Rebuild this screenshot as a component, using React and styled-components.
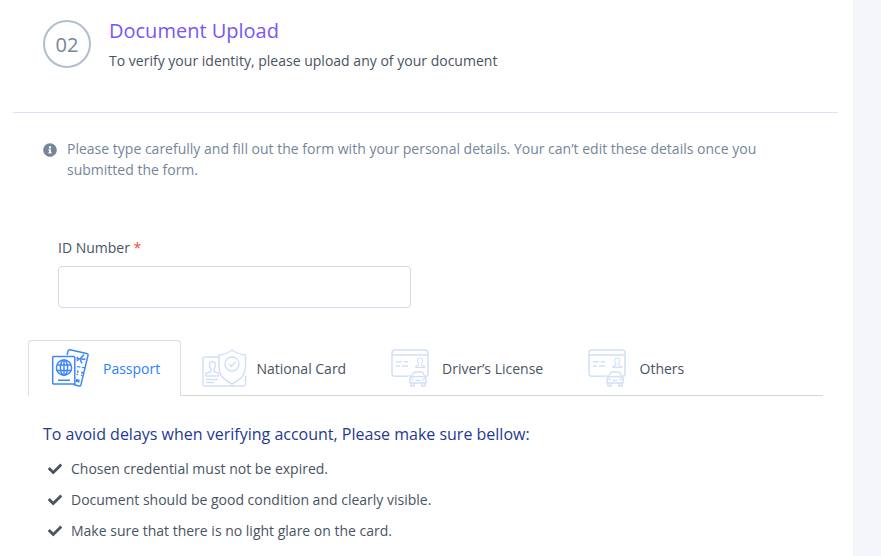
import React from "react";
import styled, { createGlobalStyle } from "styled-components";
import { FaCheck, FaInfoCircle } from "react-icons/fa";

const GlobalStyle = createGlobalStyle`
  * { box-sizing: border-box; }
  body {
    margin: 0;
    background: #f5f6fa;
    color: #495463;
    font: 400 14px/21px "Open Sans", sans-serif;
    overflow: hidden;
  }
`;

const Card = styled.main`
  width: 853px;
  height: 556px;
  padding: 0 15px 0 13px;
  background: #fff;
  overflow: hidden;
`;

const Header = styled.header`
  display: flex;
  gap: 18px;
  height: 113px;
  padding: 20px 30px 0;
  border-bottom: 1px solid #dbe4f7;
`;

const StepNumber = styled.div`
  flex: none;
  width: 48px;
  height: 48px;
  border: 2px solid #b1becc;
  border-radius: 50%;
  color: #758698;
  font-size: 20px;
  line-height: 46px;
  text-align: center;
`;

const Title = styled.h1`
  margin: -4px 0 0;
  color: #7a56f5;
  font-size: 20px;
  font-weight: 400;
  line-height: 30px;
`;

const Subtitle = styled.p`
  margin: 4px 0 0;
  letter-spacing: 0.01px;
`;

const Note = styled.div`
  display: flex;
  gap: 10px;
  margin: 25px 60px 0 30px;
  color: #758698;

  svg {
    flex: none;
    width: 14px;
    height: 14px;
    margin-top: 5px;
  }
`;

const NoteText = styled.p`
  margin: 0;
  letter-spacing: 0.004px;
`;

const Field = styled.label`
  display: block;
  width: 353px;
  margin: 57px 0 0 45px;
`;

const Required = styled.span`
  color: #f0503c;
`;

const Input = styled.input`
  display: block;
  width: 100%;
  height: 42px;
  margin-top: 8px;
  padding: 10px 15px;
  border: 1px solid #d3d9e9;
  border-radius: 4px;
  background: #fff;
  font: inherit;
  outline: none;
`;

const Tabs = styled.nav`
  display: flex;
  height: 56px;
  margin: 32px 15px 0;
  border-bottom: 1px solid #d6d7d9;
`;

const Tab = styled.button`
  display: flex;
  align-items: center;
  width: ${(p) => p.$width}px;
  height: 56px;
  padding: 0 0 0 ${(p) => p.$inset}px;
  border: 1px solid;
  border-color: ${(p) => (p.$active ? "#dcddde #dcddde #fff" : "transparent")};
  border-radius: 4px 4px 0 0;
  background: ${(p) => (p.$active ? "#fff" : "transparent")};
  color: ${(p) => (p.$active ? "#2c80ff" : "inherit")};
  font: inherit;
  white-space: nowrap;

  svg {
    flex: none;
    color: ${(p) => (p.$active ? "#3f86f7" : "#d2e0f9")};
  }
`;

const TabLabel = styled.span`
  margin-left: ${(p) => p.$gap}px;
`;

const Heading = styled.h2`
  margin: 26px 0 0 30px;
  color: #253992;
  font-size: 16px;
  font-weight: 400;
  line-height: 24px;
`;

const List = styled.ul`
  display: grid;
  gap: 10px;
  margin: 12px 0 0 35px;
  padding: 0;
  list-style: none;
`;

const Item = styled.li`
  display: flex;
  align-items: center;
  gap: 9px;

  svg {
    width: 14px;
    height: 14px;
  }
`;

const line = { fill: "none", stroke: "currentColor", strokeWidth: 1.5, strokeLinejoin: "round" };

const PassportIcon = () => (
  <svg width="40" height="40" viewBox="0 0 40 40" {...line}>
    <path d="M17 7 18.2 2.8Q18.6 1.4 20 1.7L36.7 5.4Q38.4 5.8 38 7.4L31 36.7Q30.5 38.4 28.9 38L23.5 36.5" />
    <path d="M3.5 8.5H23.5Q24.8 8.5 24.8 9.8V36H3.5Q2.7 36 2.7 35V9.5Q2.7 8.5 3.5 8.5Z" />
    <circle cx="14" cy="19.7" r="7.6" />
    <ellipse cx="14" cy="19.7" rx="3.6" ry="7.6" />
    <path d="M14 12.1V27.3M7 17H21M7 22.5H21M8 32.3H20" />
    <path d="M26.5 11 35.5 11.2M34 6.5 30 11 32 15.5M27 9 28.5 11 27 12.8" strokeWidth="1.6" />
    <path d="M27 18.5 35.5 20" strokeDasharray="3.5 1.5" strokeWidth="1.2" />
    <path d="M28 22.5 27.2 27M32.3 23.5 31.5 28" strokeDasharray="2.5 1" />
    <path d="M25.8 32.4 29.5 33.3" strokeWidth="3" />
  </svg>
);

const NationalIcon = () => (
  <svg width="46" height="40" viewBox="0 0 46 40" {...line}>
    <path d="M19 9H4Q2 9 2 11V36Q2 38 4 38H42.5Q44.5 38 44.5 36V28" />
    <path d="M31 2Q36 6 44.5 7V19C44.5 28 38 32 31 36 24 32 18 28 18 19V7Q26 6 31 2Z" />
    <circle cx="31" cy="16" r="7" />
    <path d="m28 16 2.3 2.5 4.3-4.8" />
    <path d="M8.5 17C8.5 12.5 14.5 12.5 14.5 17 14.5 19 13.8 20 13 21V23.5L17.5 25.5V28H5V25.5L10 23.5V21C9 20 8.5 19 8.5 17ZM5 31.5H17M5 34.5H13" />
  </svg>
);

const LicenseIcon = () => (
  <svg width="40" height="40" viewBox="0 0 40 40" {...line}>
    <path d="M18 28.2H5Q2 28.2 2 25.5V5Q2 2 5 2H35Q38 2 38 5V26Q38 28 36.5 28.2M2 7H38" />
    <path d="M6 13.7H12M14 13.7H18M6 18H10M12 18H18" />
    <path d="M27.7 12C27.7 9.3 32.7 9.3 32.7 12 32.7 14 32.3 15 31.7 15.7V17.2L34.7 18.4V19.4H25.7V18.4L28.7 17.2V15.7C28.1 15 27.7 14 27.7 12Z" strokeWidth="1.1" />
    <path d="M21.5 29 23.5 25Q24 24 25.5 24H31Q32.5 24 33 25L35 29M20 30Q21 28.5 28 28.5T36 30V35H20ZM21 35V38H24V35M32 35V38H35V35M18.5 28H21M35.5 28H37.5M25.5 32.5H30.5M21.5 31 23.5 32.2M34.5 31 32.5 32.2" />
  </svg>
);

const tabs = [
  { label: "Passport", Icon: PassportIcon, width: 153, inset: 21, gap: 13, active: true },
  { label: "National Card", Icon: NationalIcon, width: 188, inset: 19, gap: 9.5 },
  { label: "Driver’s License", Icon: LicenseIcon, width: 197, inset: 20, gap: 12 },
  { label: "Others", Icon: LicenseIcon, width: 140, inset: 20, gap: 12.5 },
];

const rules = [
  "Chosen credential must not be expired.",
  "Document should be good condition and clearly visible.",
  "Make sure that there is no light glare on the card.",
];

export default function App() {
  return (
    <>
      <GlobalStyle />
      <Card>
        <Header>
          <StepNumber>02</StepNumber>
          <div>
            <Title>Document Upload</Title>
            <Subtitle>To verify your identity, please upload any of your document</Subtitle>
          </div>
        </Header>
        <Note>
          <FaInfoCircle />
          <NoteText>
            Please type carefully and fill out the form with your personal details. Your can’t edit
            these details once you submitted the form.
          </NoteText>
        </Note>
        <Field>
          ID Number <Required>*</Required>
          <Input type="text" />
        </Field>
        <Tabs>
          {tabs.map(({ label, Icon, width, inset, gap, active }) => (
            <Tab key={label} type="button" $active={active} $width={width} $inset={inset}>
              <Icon />
              <TabLabel $gap={gap}>{label}</TabLabel>
            </Tab>
          ))}
        </Tabs>
        <Heading>To avoid delays when verifying account, Please make sure bellow:</Heading>
        <List>
          {rules.map((rule) => (
            <Item key={rule}>
              <FaCheck />
              {rule}
            </Item>
          ))}
        </List>
      </Card>
    </>
  );
}
